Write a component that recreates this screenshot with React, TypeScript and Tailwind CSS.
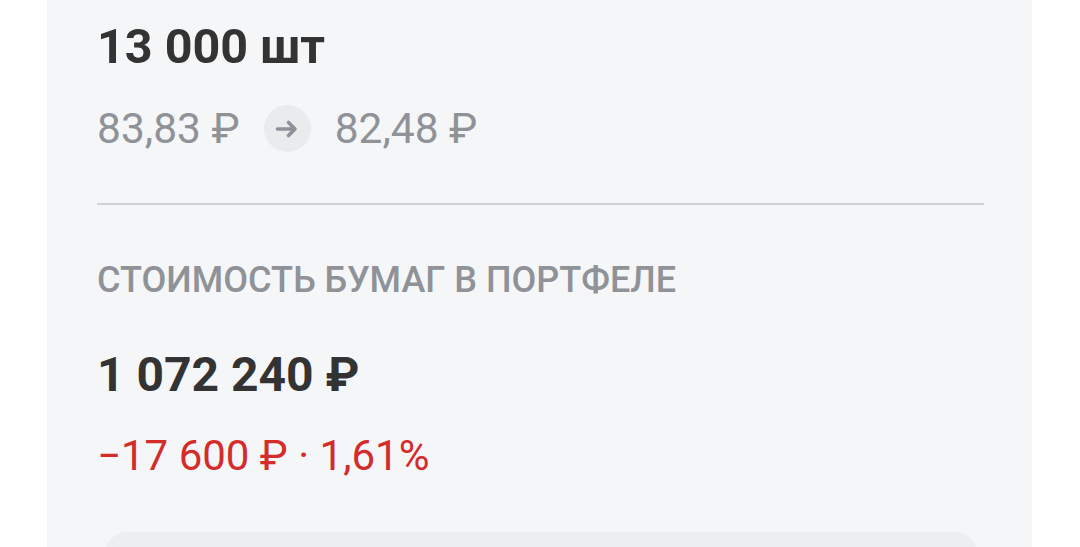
import React from "react";

const ArrowRight = () => (
  <svg width="24" height="24" viewBox="0 0 24 24" fill="none">
    <path d="M2.5 12h17M13.5 5.5L20 12l-6.5 6.5" stroke="#8e9197" strokeWidth="3.6" strokeLinecap="round" strokeLinejoin="round" />
  </svg>
);

const App = () => {
  return (
    <div className="w-[1080px] h-[547px] overflow-hidden bg-white font-['Roboto',sans-serif]">
      <div className="ml-[47px] w-[985px] h-full bg-[#f5f6f8] pl-[50px] pr-[48px] flex flex-col">
        <div className="shrink-0 mt-[22px] text-[48.5px] leading-[50px] font-bold text-[#333333]">13 000 шт</div>
        <div className="shrink-0 mt-[33px] flex items-center h-[47px] text-[42.5px] leading-[44px] text-[#8f9297]">
          <span>83,83 ₽</span>
          <span className="mx-[24px] w-[47px] h-[47px] rounded-full bg-[#eaebed] flex items-center justify-center">
            <ArrowRight />
          </span>
          <span>82,48 ₽</span>
        </div>
        <div className="shrink-0 mt-[51px] h-[2px] bg-[#cfd1d4]" />
        <div className="shrink-0 mt-[57px] text-[36px] leading-[36px] font-medium text-[#8f9297]">СТОИМОСТЬ БУМАГ В ПОРТФЕЛЕ</div>
        <div className="shrink-0 mt-[53px] text-[48px] leading-[48px] font-bold text-[#333333]">1 072 240 ₽</div>
        <div className="shrink-0 mt-[36px] text-[42px] leading-[42px] text-[#d42b2b]">−17 600 ₽ · 1,61%</div>
        <div className="shrink-0 mt-[55px] ml-[8px] mr-[7px] h-[80px] rounded-[22px] bg-[#edeef0]" />
      </div>
    </div>
  );
};

export default App;
